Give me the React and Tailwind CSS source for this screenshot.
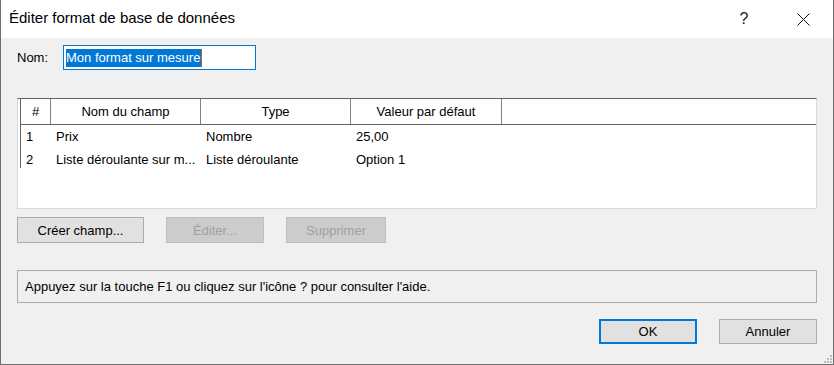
import React from "react";

function Btn({ children, w, disabled, primary }) {
  const base = "flex items-center justify-center text-[13px] leading-none ";
  let cls;
  if (disabled) cls = "bg-[#cccccc] border border-[#bfbfbf] text-[#a0a0a0]";
  else if (primary) cls = "bg-[#e1e1e1] border-2 border-[#0078d7] text-black";
  else cls = "bg-[#e1e1e1] border border-[#adadad] text-black";
  return <div className={base + cls + " " + w}>{children}</div>;
}

export default function App() {
  const rows = [
    ["1", "Prix", "Nombre", "25,00"],
    ["2", "Liste déroulante sur m...", "Liste déroulante", "Option 1"],
  ];
  return (
    <div className="w-[834px] h-[365px] flex flex-col bg-[#f0f0f0] border-l border-r border-b border-[#707070] font-['Liberation_Sans',Arial,sans-serif] text-black relative overflow-hidden">
      {/* Title bar */}
      <div className="h-[38px] bg-white flex items-center shrink-0">
        <div className="pl-[8px] text-[15px] text-black flex-1 pb-[1px]">Éditer format de base de données</div>
        <div className="w-[58px] h-full flex items-center justify-center text-[16px] text-[#1a1a1a]">?</div>
        <div className="w-[60px] h-full flex items-center justify-center">
          <svg width="13" height="13" viewBox="0 0 13 13">
            <path d="M0.5 0.5 L12.5 12.5 M12.5 0.5 L0.5 12.5" stroke="#111" strokeWidth="1" fill="none" />
          </svg>
        </div>
      </div>

      {/* Body */}
      <div className="flex flex-col px-[16px]">
        <div className="mt-[7px] flex items-center h-[25px]">
          <div className="w-[46px] text-[13px]">Nom:</div>
          <div className="w-[193px] h-[25px] border border-[#0078d7] bg-white flex items-center pl-[2px]">
            <span className="bg-[#0078d7] text-white text-[13px] leading-[18px] h-[18px] pr-[1px]">Mon format sur mesure</span>
            <span className="w-[1px] h-[18px] bg-[#b8641c]"></span>
          </div>
        </div>

        {/* List */}
        <div className="mt-[28px] h-[111px] bg-white border-t border-t-[#646464] border-l border-r border-b border-[#dadada] flex flex-col">
          <div className="ml-[2px] border-l border-[#646464] flex flex-col h-[69px]">
            <div className="h-[26px] flex items-stretch bg-white border-b border-[#646464] text-[13px] shrink-0">
              <div className="w-[30px] flex items-center justify-center border-r border-[#828282]">#</div>
              <div className="w-[150px] flex items-center justify-center border-r border-[#828282]">Nom du champ</div>
              <div className="w-[150px] flex items-center justify-center border-r border-[#828282]">Type</div>
              <div className="w-[151px] flex items-center justify-center border-r border-[#828282]">Valeur par défaut</div>
              <div className="flex-1"></div>
            </div>
            {rows.map((r, i) => (
              <div key={i} className="h-[22px] flex items-center text-[13px] shrink-0 mt-[1px]">
                <div className="w-[30px] pl-[5px]">{r[0]}</div>
                <div className="w-[150px] pl-[5px] whitespace-nowrap">{r[1]}</div>
                <div className="w-[150px] pl-[5px]">{r[2]}</div>
                <div className="w-[151px] pl-[5px]">{r[3]}</div>
              </div>
            ))}
          </div>
        </div>

        {/* Buttons */}
        <div className="mt-[8px] h-[26px] flex gap-[22px]">
          <Btn w="w-[127px]">Créer champ...</Btn>
          <Btn w="w-[98px]" disabled>Éditer...</Btn>
          <Btn w="w-[100px]" disabled>Supprimer</Btn>
        </div>

        {/* Help */}
        <div className="mt-[27px] h-[33px] border border-[#adadad] bg-[#f0f0f0] flex items-center pl-[7px] text-[13px]">
          Appuyez sur la touche F1 ou cliquez sur l'icône ? pour consulter l'aide.
        </div>

        {/* OK / Annuler */}
        <div className="mt-[16px] h-[25px] flex justify-end gap-[22px]">
          <Btn w="w-[98px]" primary>OK</Btn>
          <Btn w="w-[98px]">Annuler</Btn>
        </div>
      </div>

      {/* Resize grip */}
      <svg className="absolute right-[1px] bottom-[1px]" width="10" height="10" viewBox="0 0 10 10">
        <rect x="8" y="2" width="2" height="2" fill="#bdbdbd" />
        <rect x="5" y="5" width="2" height="2" fill="#bdbdbd" />
        <rect x="8" y="5" width="2" height="2" fill="#bdbdbd" />
        <rect x="2" y="8" width="2" height="2" fill="#bdbdbd" />
        <rect x="5" y="8" width="2" height="2" fill="#bdbdbd" />
        <rect x="8" y="8" width="2" height="2" fill="#bdbdbd" />
      </svg>
    </div>
  );
}
